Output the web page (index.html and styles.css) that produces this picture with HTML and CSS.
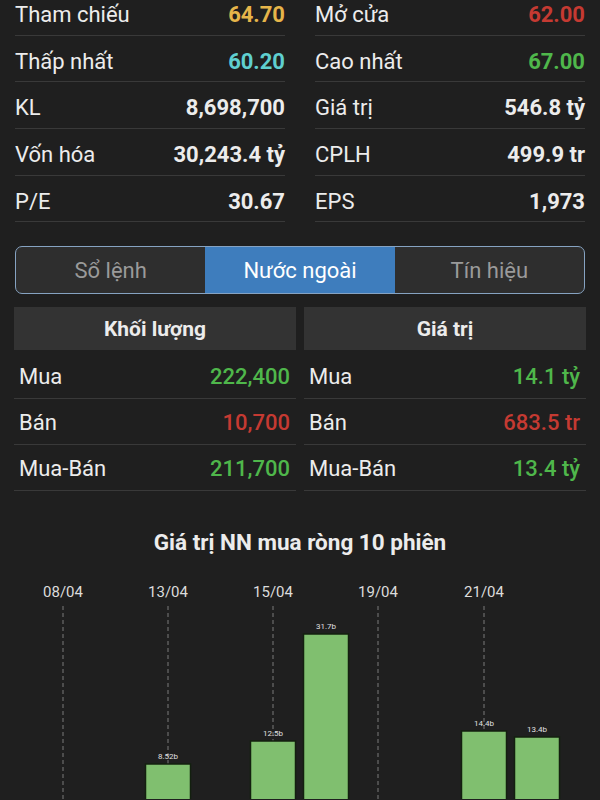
FILE: index.html
```html
<!DOCTYPE html>
<html>
<head>
  <meta charset="utf-8">
  <link rel="stylesheet" href="styles.css">
</head>
<body>
  <div class="page">

    <div class="stats">
      <div class="stat"><span class="stat-label">Tham chiếu</span><span class="stat-value ref">64.70</span></div>
      <div class="stat"><span class="stat-label">Mở cửa</span><span class="stat-value down">62.00</span></div>
      <div class="stat"><span class="stat-label">Thấp nhất</span><span class="stat-value floor">60.20</span></div>
      <div class="stat"><span class="stat-label">Cao nhất</span><span class="stat-value up">67.00</span></div>
      <div class="stat"><span class="stat-label">KL</span><span class="stat-value">8,698,700</span></div>
      <div class="stat"><span class="stat-label">Giá trị</span><span class="stat-value">546.8 tỷ</span></div>
      <div class="stat"><span class="stat-label">Vốn hóa</span><span class="stat-value">30,243.4 tỷ</span></div>
      <div class="stat"><span class="stat-label">CPLH</span><span class="stat-value">499.9 tr</span></div>
      <div class="stat"><span class="stat-label">P/E</span><span class="stat-value">30.67</span></div>
      <div class="stat"><span class="stat-label">EPS</span><span class="stat-value">1,973</span></div>
    </div>

    <div class="tabs">
      <div class="tab">Sổ lệnh</div>
      <div class="tab active">Nước ngoài</div>
      <div class="tab">Tín hiệu</div>
    </div>

    <div class="foreign">
      <div class="panel">
        <div class="panel-head">Khối lượng</div>
        <div class="panel-row"><span>Mua</span><span class="panel-value up">222,400</span></div>
        <div class="panel-row"><span>Bán</span><span class="panel-value down">10,700</span></div>
        <div class="panel-row"><span>Mua-Bán</span><span class="panel-value up">211,700</span></div>
      </div>
      <div class="panel">
        <div class="panel-head">Giá trị</div>
        <div class="panel-row"><span>Mua</span><span class="panel-value up">14.1 tỷ</span></div>
        <div class="panel-row"><span>Bán</span><span class="panel-value down">683.5 tr</span></div>
        <div class="panel-row"><span>Mua-Bán</span><span class="panel-value up">13.4 tỷ</span></div>
      </div>
    </div>

    <div class="chart-title">Giá trị NN mua ròng 10 phiên</div>

    <!-- 10 sessions, slot width 52.5, baseline below the fold -->
    <svg class="chart" width="600" height="240" viewBox="0 0 600 240">
      <g class="chart-dates">
        <text x="63" y="38">08/04</text>
        <text x="168" y="38">13/04</text>
        <text x="273" y="38">15/04</text>
        <text x="378" y="38">19/04</text>
        <text x="484" y="38">21/04</text>
      </g>
      <g class="chart-grid">
        <line x1="63" y1="47" x2="63" y2="240"/>
        <line x1="168" y1="47" x2="168" y2="240"/>
        <line x1="273" y1="47" x2="273" y2="240"/>
        <line x1="378" y1="47" x2="378" y2="240"/>
        <line x1="484" y1="47" x2="484" y2="240"/>
      </g>
      <g class="chart-bars">
        <rect x="145.5" y="205" width="45" height="60"/>
        <rect x="250.5" y="182" width="45" height="80"/>
        <rect x="303.5" y="75" width="45" height="180"/>
        <rect x="461.5" y="172" width="45" height="80"/>
        <rect x="514.5" y="178" width="45" height="80"/>
      </g>
      <g class="chart-labels">
        <text x="168" y="200">8.52b</text>
        <text x="273" y="177">12.5b</text>
        <text x="326" y="70">31.7b</text>
        <text x="484" y="167">14.4b</text>
        <text x="537" y="173">13.4b</text>
      </g>
    </svg>

  </div>
</body>
</html>
```

FILE: styles.css
```css
body {
  margin: 0;
  background: #1f1f1f;
  color: #ececec;
  font-family: Roboto, "Noto Sans", sans-serif;
  font-size: 22px;
  overflow: hidden;
}
.page {
  padding: 0 15px;
}

/* top stats */
.stats {
  display: grid;
  grid-template-columns: 1fr 1fr;
  column-gap: 30px;
  margin-top: -11px;
}
.stat {
  display: flex;
  justify-content: space-between;
  align-items: center;
  box-sizing: border-box;
  height: 46.7px;
  padding-top: 5px;
  border-bottom: 1px solid #393939;
}
.stat-value {
  font-weight: bold;
}
.ref { color: #e6b54a; }
.floor { color: #5fcfcf; }
.up { color: #4fb74b; }
.down { color: #c53a32; }

/* tabs */
.tabs {
  display: grid;
  grid-template-columns: 1fr 1fr 1fr;
  margin-top: 24px;
  height: 48px;
  box-sizing: border-box;
  border: 1.5px solid #86a3c2;
  border-radius: 7px;
  overflow: hidden;
  background: #2e2e2e;
}
.tab {
  display: flex;
  align-items: center;
  justify-content: center;
  color: #9a9a9a;
}
.tab.active {
  background: #3e7dbd;
  color: #fff;
}

/* foreign trading */
.foreign {
  display: grid;
  grid-template-columns: 1fr 1fr;
  column-gap: 8px;
  margin: 13px -1px 0;
}
.panel-head {
  height: 43px;
  display: flex;
  align-items: center;
  justify-content: center;
  background: #333;
  font-weight: bold;
  font-size: 21px;
  margin-bottom: 3px;
}
.panel-row {
  display: flex;
  justify-content: space-between;
  align-items: center;
  box-sizing: border-box;
  height: 46px;
  padding: 1px 6px 0 5px;
  border-bottom: 1px solid #393939;
}
.panel-value {
  font-weight: 500;
}

/* chart */
.chart-title {
  margin-top: 38px;
  text-align: center;
  font-weight: bold;
  font-size: 22.5px;
  line-height: 26px;
}
.chart {
  display: block;
  margin: 4px 0 0 -15px;
}
.chart-dates text {
  fill: #dcdcdc;
  font-size: 15px;
  text-anchor: middle;
}
.chart-grid line {
  stroke: #7a7a7a;
  stroke-width: 1;
  stroke-dasharray: 4 3;
}
.chart-bars rect {
  fill: #80bf6f;
  stroke: #13200f;
  stroke-width: 1.5;
}
.chart-labels text {
  fill: #e0e0e0;
  font-size: 8px;
  text-anchor: middle;
}
```
